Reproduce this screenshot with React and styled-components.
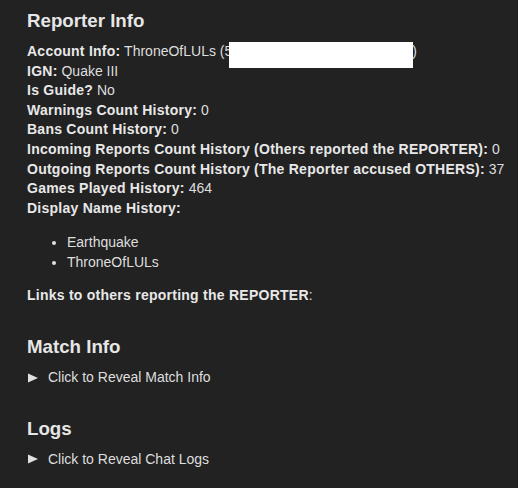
import styled, { createGlobalStyle } from "styled-components";

const Global = createGlobalStyle`
  html, body {
    margin: 0;
    padding: 0;
    background: #222222;
  }
  body {
    font-family: "Liberation Sans", Arial, sans-serif;
    font-size: 14px;
    color: #dedede;
  }
`;

const Page = styled.div`
  padding: 10px 4px 20px 27px;
  min-height: 488px;
  box-sizing: border-box;
  background: #222222;
`;

const Section = styled.section`
  & + & {
    margin-top: 30px;
  }
`;

const Heading = styled.h3`
  margin: 0 0 10px;
  font-size: 18.72px;
  line-height: 22px;
  font-weight: bold;
  color: #e6e6e6;
`;

const Line = styled.div`
  line-height: 19.6px;
  white-space: nowrap;
`;

const Label = styled.b`
  color: #e8e8e8;
  letter-spacing: 0.25px;
`;

const Redacted = styled.span`
  display: inline-block;
  vertical-align: top;
  width: 184px;
  height: 26px;
  margin: 0 -1px -6.4px -3px;
  background: #ffffff;
  position: relative;
`;

const NameList = styled.ul`
  margin: 14px 0;
  padding-left: 40px;
  line-height: 20px;
`;

const Reveal = styled.div`
  display: flex;
  align-items: center;
  gap: 10px;
  line-height: 19.6px;
  padding-left: 1px;
  cursor: pointer;
`;

const Arrow = () => (
  <svg width="10" height="10" viewBox="0 0 10 10">
    <polygon points="0,0.5 10,5 0,9.5" fill="#e0e0e0" />
  </svg>
);

const stats = [
  ["IGN:", "Quake III"],
  ["Is Guide?", "No"],
  ["Warnings Count History:", "0"],
  ["Bans Count History:", "0"],
  ["Incoming Reports Count History (Others reported the REPORTER):", "0"],
  ["Outgoing Reports Count History (The Reporter accused OTHERS):", "37"],
  ["Games Played History:", "464"],
];

export default function App() {
  return (
    <Page>
      <Global />
      <Section>
        <Heading>Reporter Info</Heading>
        <Line>
          <Label>Account Info:</Label> ThroneOfLULs (5<Redacted />)
        </Line>
        {stats.map(([k, v]) => (
          <Line key={k}>
            <Label>{k}</Label> {v}
          </Line>
        ))}
        <Line>
          <Label>Display Name History:</Label>
        </Line>
        <NameList>
          <li>Earthquake</li>
          <li>ThroneOfLULs</li>
        </NameList>
        <Line>
          <Label>Links to others reporting the REPORTER</Label>:
        </Line>
      </Section>
      <Section>
        <Heading>Match Info</Heading>
        <Reveal>
          <Arrow />
          Click to Reveal Match Info
        </Reveal>
      </Section>
      <Section>
        <Heading>Logs</Heading>
        <Reveal>
          <Arrow />
          Click to Reveal Chat Logs
        </Reveal>
      </Section>
    </Page>
  );
}
